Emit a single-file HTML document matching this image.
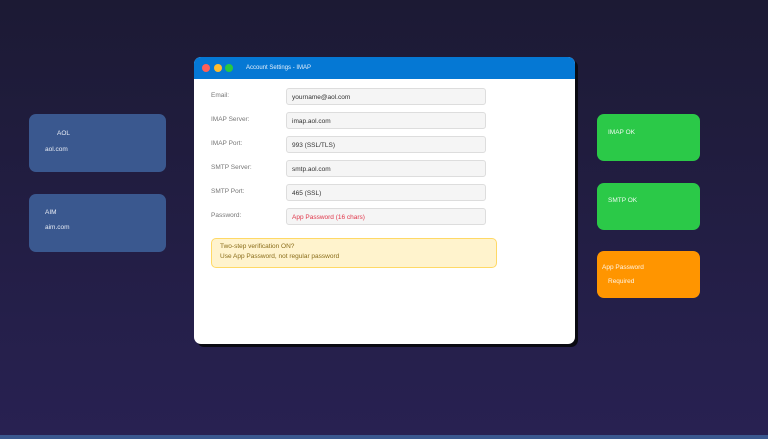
<!DOCTYPE html>
<html><head><meta charset="utf-8"><style>
*{margin:0;padding:0;box-sizing:border-box}
body{width:768px;height:439px;overflow:hidden;position:relative;font-family:"Liberation Sans",sans-serif;background:linear-gradient(#1c1a34,#282152)}
.a{position:absolute}
.t{position:absolute;font-size:6.5px;white-space:nowrap;line-height:1}
.card{position:absolute;border-radius:7px}
.lbl{position:absolute;left:17px;font-size:6.5px;color:#777;line-height:1}
.inp{position:absolute;left:92px;width:200px;height:17px;background:#f5f5f5;border:1px solid #ddd;border-radius:3px;font-size:6.5px;color:#333;padding:6px 0 0 5px;line-height:1}
</style></head><body>
<div class="card" style="left:29px;top:114px;width:137px;height:58px;background:#3a588f"></div>
<div class="t" style="left:57px;top:131px;color:#e8ecf5">AOL</div>
<div class="t" style="left:45px;top:147px;color:#e8ecf5">aol.com</div>
<div class="card" style="left:29px;top:194px;width:137px;height:58px;background:#3a588f"></div>
<div class="t" style="left:45px;top:210px;color:#e8ecf5">AIM</div>
<div class="t" style="left:45px;top:225px;color:#e8ecf5">aim.com</div>

<div class="card" style="left:597px;top:114px;width:103px;height:47px;background:#2bc948"></div>
<div class="t" style="left:608px;top:130px;color:#eefaf0">IMAP OK</div>
<div class="card" style="left:597px;top:183px;width:103px;height:47px;background:#2bc948"></div>
<div class="t" style="left:608px;top:198px;color:#eefaf0">SMTP OK</div>
<div class="card" style="left:597px;top:251px;width:103px;height:47px;background:#ff9500"></div>
<div class="t" style="left:602px;top:265px;color:#fff5e6">App Password</div>
<div class="t" style="left:608px;top:279px;color:#fff5e6">Required</div>

<div class="a" style="left:197px;top:60px;width:381px;height:287px;background:#0a0a12;border-radius:7px"></div>
<div class="a" style="left:194px;top:57px;width:381px;height:287px;background:#fff;border-radius:7px;overflow:hidden">
 <div class="a" style="left:0;top:0;width:381px;height:22px;background:#0578d4"></div>
 <div class="a" style="left:8px;top:7px;width:8px;height:8px;border-radius:50%;background:#ff5f57"></div>
 <div class="a" style="left:19.5px;top:7px;width:8px;height:8px;border-radius:50%;background:#febc2e"></div>
 <div class="a" style="left:31px;top:7px;width:8px;height:8px;border-radius:50%;background:#28c840"></div>
 <div class="t" style="left:52px;top:8px;font-size:6px;color:#e6f0fb">Account Settings - IMAP</div>
 <div class="lbl" style="top:36px">Email:</div><div class="inp" style="top:31px">yourname@aol.com</div>
 <div class="lbl" style="top:60px">IMAP Server:</div><div class="inp" style="top:55px">imap.aol.com</div>
 <div class="lbl" style="top:84px">IMAP Port:</div><div class="inp" style="top:79px">993 (SSL/TLS)</div>
 <div class="lbl" style="top:108px">SMTP Server:</div><div class="inp" style="top:103px">smtp.aol.com</div>
 <div class="lbl" style="top:132px">SMTP Port:</div><div class="inp" style="top:127px">465 (SSL)</div>
 <div class="lbl" style="top:156px">Password:</div><div class="inp" style="top:151px;color:#e0364a">App Password (16 chars)</div>
 <div class="a" style="left:17px;top:181px;width:286px;height:30px;background:#fff3cd;border:1px solid #ffd966;border-radius:5px"></div>
 <div class="t" style="left:26px;top:186px;color:#8a6d1a;top:187px">Two-step verification ON?</div>
 <div class="t" style="left:26px;top:197px;color:#8a6d1a">Use App Password, not regular password</div>
</div>
<div class="a" style="left:0;top:435px;width:768px;height:4px;background:#3a588f"></div>
</body></html>
